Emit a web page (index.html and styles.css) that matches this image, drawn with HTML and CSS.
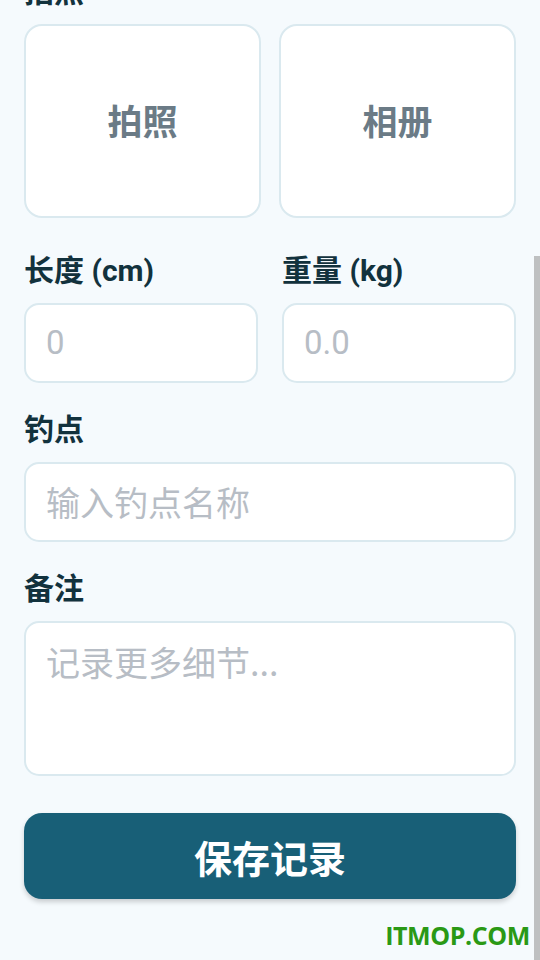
FILE: index.html
```html
<!DOCTYPE html>
<html lang="zh-CN">
<head>
<meta charset="utf-8">
<title>记录</title>
<link rel="stylesheet" href="styles.css">
</head>
<body>
<div class="page">
  <div class="form">
    <section class="group">
      <div class="label">拍照</div>
      <div class="photo-row">
        <div class="photo-btn">拍照</div>
        <div class="photo-btn">相册</div>
      </div>
    </section>
    <section class="pair group gap-lg">
      <div class="col">
        <div class="label">长度 (cm)</div>
        <div class="input"><span class="ph">0</span></div>
      </div>
      <div class="col">
        <div class="label">重量 (kg)</div>
        <div class="input"><span class="ph">0.0</span></div>
      </div>
    </section>
    <section class="group">
      <div class="label">钓点</div>
      <div class="input"><span class="ph cjk">输入钓点名称</span></div>
    </section>
    <section class="group">
      <div class="label">备注</div>
      <div class="textarea"><span class="ph cjk">记录更多细节...</span></div>
    </section>
    <button class="save">保存记录</button>
  </div>
  <div class="watermark">ITMOP.COM</div>
  <div class="scrollbar"></div>
</div>
</body>
</html>
```
FILE: styles.css
```css
html, body {
  margin: 0;
  padding: 0;
  height: 100%;
  overflow: hidden;
}
body {
  background: #f5fafd;
  font-family: Roboto, "Noto Sans CJK SC", sans-serif;
}
.page {
  position: relative;
  width: 540px;
  height: 960px;
  overflow: hidden;
}
.form {
  margin-top: -25px;
  padding: 0 24px;
  display: flex;
  flex-direction: column;
}
.group {
  margin-bottom: 30px;
}
.group:first-child {
  margin-bottom: 36px;
}
.label {
  font-size: 30px;
  line-height: 34px;
  font-weight: 700;
  color: #12323d;
  margin-bottom: 15px;
}
.photo-row {
  display: grid;
  grid-template-columns: 1fr 1fr;
  gap: 18px;
}
.photo-btn {
  box-sizing: border-box;
  height: 194px;
  background: #ffffff;
  border: 2px solid #dae9ef;
  border-radius: 18px;
  display: flex;
  align-items: center;
  justify-content: center;
  font-size: 35px;
  font-weight: 700;
  color: #6b7b86;
  font-family: "Noto Sans CJK SC", sans-serif;
  padding-bottom: 4px;
}
.pair {
  display: grid;
  grid-template-columns: 1fr 1fr;
  gap: 24px;
}
.input, .textarea {
  box-sizing: border-box;
  background: #ffffff;
  border: 2px solid #dae9ef;
  border-radius: 15px;
  padding: 0 20px;
  display: flex;
  align-items: center;
}
.input {
  height: 80px;
}
.textarea {
  height: 155px;
  align-items: flex-start;
  padding-top: 19px;
}
.ph {
  font-size: 33px;
  line-height: 40px;
  color: #b7bdc5;
}
.ph.cjk {
  font-size: 34px;
  font-family: "Noto Sans CJK SC", sans-serif;
}
.save {
  margin-top: 7px;
  height: 86px;
  border: none;
  border-radius: 18px;
  background: #185f77;
  color: #ffffff;
  font-family: "Noto Sans CJK SC", sans-serif;
  font-size: 38px;
  font-weight: 700;
  box-shadow: 0 3px 5px rgba(0, 0, 0, 0.18);
  padding: 0;
}
.watermark {
  position: absolute;
  right: 10px;
  bottom: 8px;
  font-family: "Open Sans", sans-serif;
  font-weight: 700;
  font-size: 25px;
  color: #2a9915;
  letter-spacing: -0.4px;
}
.scrollbar {
  position: absolute;
  right: 0;
  top: 256px;
  bottom: 0;
  width: 6px;
  background: #bec0c1;
}
```
